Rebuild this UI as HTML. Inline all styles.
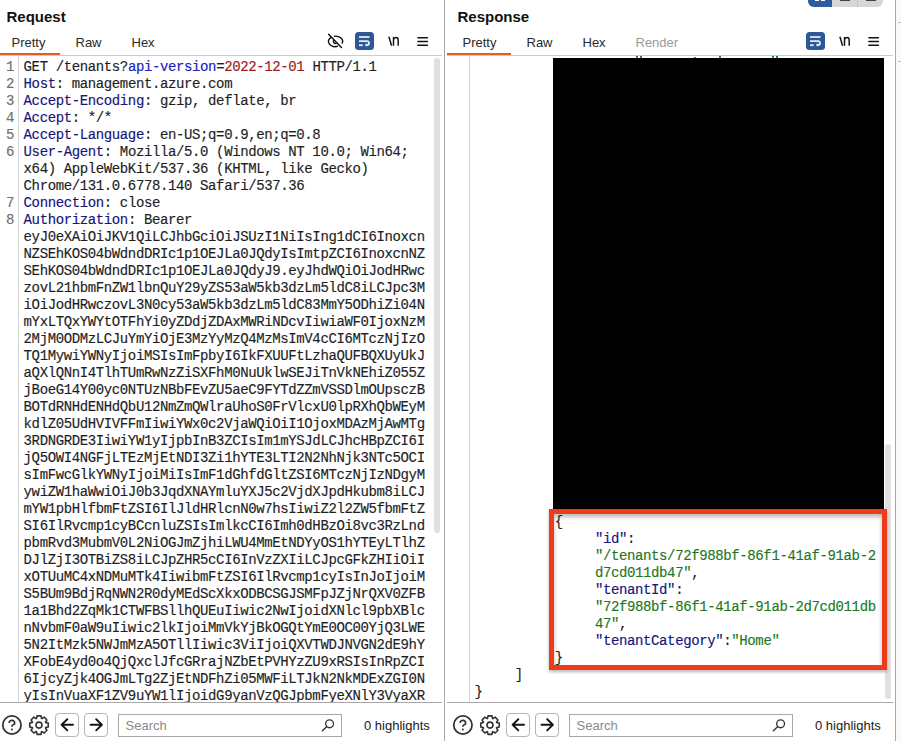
<!DOCTYPE html><html><head><meta charset="utf-8"><style>
*{margin:0;padding:0;box-sizing:border-box}
html,body{width:901px;height:741px;overflow:hidden;background:#fff}
body{position:relative;font-family:"Liberation Sans",sans-serif;color:#1e1e1e}
.panel{position:absolute;top:0;width:448px;height:741px;overflow:hidden}
.clipL{position:absolute;left:0;top:0;width:444px;height:741px;overflow:hidden}
.title{position:absolute;left:10.5px;top:8px;font-size:15px;font-weight:bold;line-height:18px;color:#111}
.tab{position:absolute;top:35px;font-size:13px;line-height:16px;color:#2a2a2a}
.tab.dis{color:#9a9a9a}
.tabline{position:absolute;left:0;top:55px;width:446px;height:1px;background:#c9cdcd}
.tabul{position:absolute;left:0;top:53px;width:64px;height:2px;background:#e9572b}
.ic{position:absolute}
.wrapbtn{position:absolute;left:359px;top:32px;width:19px;height:18px;border-radius:3.5px;background:#2d5898}
.wrapbtn svg{display:block}
.nl{position:absolute;left:391.5px;top:32.5px;font-size:14px;line-height:16px;color:#1a1a1a}
.hamb{position:absolute;left:421.5px;top:37px;width:11px;height:10px}
.hamb i{position:absolute;left:0;width:10px;height:1.5px;background:#1a1a1a;border-radius:1px}
.grp{position:absolute;left:361px;top:-18px;width:75px;height:25px;border-radius:6px;overflow:hidden;background:#d6d6d6}
.grp .g1{position:absolute;left:0;top:0;width:24px;height:25px;background:#2f5c9f}
.grp .g1 i{position:absolute;top:0;width:4px;height:19px;background:#fff}
.grp .g2{position:absolute;left:24px;top:0;width:26px;height:25px;border-right:1px solid #c4c4c4}
.grp .g2 i,.grp .g3 i{position:absolute;left:8px;top:0;width:10px;height:19px;border-bottom:1.5px solid #444}
.grp .g3{position:absolute;left:50px;top:0;width:25px;height:25px}
.gutline{position:absolute;left:22px;top:56px;width:1px;height:646px;background:#d2d2d2}
.bottomline{position:absolute;left:0;top:702px;width:446px;height:1px;background:#aaa6a6}
.abox{position:absolute;top:713px;width:24px;height:24px;border:1px solid #b9b3b3;border-radius:4px}
.abox svg{display:block}
.sbox{position:absolute;left:122px;top:714px;width:224px;height:23px;border:1px solid #aaa7a7}
.sbox span{position:absolute;left:6.5px;top:2.5px;font-size:13px;line-height:16px;color:#8a8a8a}
.hl{position:absolute;left:368px;top:717.5px;font-size:13px;line-height:16px;color:#1a1a1a}
.code{position:absolute;left:0;top:57px;width:446px;height:645px;overflow:hidden;font-family:"Liberation Mono",monospace;font-size:14px;letter-spacing:-0.38px;-webkit-text-stroke:0.15px}
.row{position:absolute;left:0;height:17px;line-height:17px;white-space:pre}
.row .n{position:absolute;left:2px;width:16px;text-align:right;color:#707070}
.row .t{position:absolute;left:27.6px;color:#1e1e1e}
.h{color:#15157a}
.qn{color:#2020b8}
.qv{color:#9a1c1c}
.k{color:#15157a}
.s{color:#1d781d}
.thumb{position:absolute;width:6px;border-radius:3px;background:#e0e0e0}
.vdiv{position:absolute;top:0;width:1px;height:741px;background:#aaa5a5}
</style></head><body>
<div class="clipL">
<div class="panel" style="left:-4px">
<div class="title">Request</div>
<div class="tab " style="left:15.5px">Pretty</div>
<div class="tab " style="left:79.5px">Raw</div>
<div class="tab " style="left:135.5px">Hex</div>
<div class="tabline"></div><div class="tabul"></div>
<svg class="ic" style="left:328px;top:30px" width="24" height="22" viewBox="0 0 24 22"><g fill="none" stroke="#111" stroke-width="1.4"><path d="M9.78 6.35 A7.1 5.2 0 0 1 17.93 13.6"/><path d="M7.13 7.3 A7.1 5.2 0 0 0 13.93 16.29"/><path d="M9.95 9.88 A2.1 2.1 0 0 0 12.48 13.18"/><path d="M4.6 4.3 L17.4 17.4" stroke-width="1.5" stroke-linecap="round"/></g></svg>
<div class="wrapbtn"><svg width="19" height="18" viewBox="0 0 19 18"><g fill="none" stroke="#e6ebf2" stroke-width="1.8"><path d="M4 5H14.5"/><path d="M4 9.15H12.1A1.95 1.95 0 0 1 12.1 13.05H11.4"/><path d="M4 13.2H7.7"/></g><path d="M9.7 13.05L11.9 11.3V14.8Z" fill="#e6ebf2"/></svg></div>
<svg class="ic" style="left:388px;top:30px" width="18" height="20" viewBox="0 0 18 20"><g fill="none" stroke="#111" stroke-width="1.45"><path d="M4.9 6.8 L7.6 15.7"/><path d="M9.5 7.0 V15.8 M9.5 9.6 C10.2 6.9 14.2 6.5 14.2 10.1 V15.8"/></g></svg>
<svg class="ic" style="left:420px;top:33px" width="14" height="16" viewBox="0 0 14 16"><g stroke="#111" stroke-width="1.45" stroke-linecap="round"><path d="M1.9 4.7H11.4M1.9 8.5H11.4M1.9 12.3H11.4"/></g></svg>
<div class="gutline"></div>
<div class="bottomline"></div>
<svg class="ic" style="left:4px;top:713px" width="24" height="24" viewBox="0 0 24 24"><circle cx="11.9" cy="12" r="9.15" fill="none" stroke="#333" stroke-width="1.75"/><path d="M9.15 10.1A2.75 2.75 0 1 1 14.45 11.1C13.3 11.8 11.9 12.2 11.9 13.3V13.7" fill="none" stroke="#333" stroke-width="1.7" stroke-linecap="butt"/><circle cx="11.9" cy="16.6" r="1.0" fill="#333"/></svg>
<svg class="ic" style="left:31px;top:713px" width="24" height="24" viewBox="0 0 24 24"><path d="M9.46 5.47 L10.04 2.86 L13.96 2.86 L14.54 5.47 L14.89 5.61 L17.15 4.17 L19.93 6.95 L18.49 9.21 L18.63 9.56 L21.24 10.14 L21.24 14.06 L18.63 14.64 L18.49 14.99 L19.93 17.25 L17.15 20.03 L14.89 18.59 L14.54 18.73 L13.96 21.34 L10.04 21.34 L9.46 18.73 L9.11 18.59 L6.85 20.03 L4.07 17.25 L5.51 14.99 L5.37 14.64 L2.76 14.06 L2.76 10.14 L5.37 9.56 L5.51 9.21 L4.07 6.95 L6.85 4.17 L9.11 5.61 Z" fill="none" stroke="#333" stroke-width="1.6" stroke-linejoin="round"/><circle cx="12" cy="12.1" r="3.0" fill="none" stroke="#333" stroke-width="1.6"/></svg>
<div class="abox" style="left:59px"><svg width="23" height="23" viewBox="0 0 23 23"><path d="M17 10.8H5.8M11.3 5.2L5.6 10.8L11.3 16.4" fill="none" stroke="#161616" stroke-width="1.9" stroke-linecap="round" stroke-linejoin="round"/></svg></div>
<div class="abox" style="left:88px"><svg width="23" height="23" viewBox="0 0 23 23"><path d="M5.5 10.8H16.7M11.2 5.2L16.9 10.8L11.2 16.4" fill="none" stroke="#161616" stroke-width="1.9" stroke-linecap="round" stroke-linejoin="round"/></svg></div>
<div class="sbox"><span>Search</span><svg style="position:absolute;left:199.5px;top:4px" width="16" height="15" viewBox="0 0 16 15"><circle cx="10.6" cy="4.8" r="3.9" fill="none" stroke="#333" stroke-width="1.35"/><path d="M7.8 7.6L3.4 11.8" stroke="#333" stroke-width="1.4" stroke-linecap="round"/></svg></div>
<div class="hl">0 highlights</div>
<div class="code">
<div class="row" style="top:2px"><span class="n">1</span><span class="t">GET /tenants?<span class="qn">api-version</span>=<span class="qv">2022-12-01</span> HTTP/1.1</span></div>
<div class="row" style="top:19px"><span class="n">2</span><span class="t"><span class="h">Host</span>: management.azure.com</span></div>
<div class="row" style="top:36px"><span class="n">3</span><span class="t"><span class="h">Accept-Encoding</span>: gzip, deflate, br</span></div>
<div class="row" style="top:53px"><span class="n">4</span><span class="t"><span class="h">Accept</span>: */*</span></div>
<div class="row" style="top:70px"><span class="n">5</span><span class="t"><span class="h">Accept-Language</span>: en-US;q=0.9,en;q=0.8</span></div>
<div class="row" style="top:87px"><span class="n">6</span><span class="t"><span class="h">User-Agent</span>: Mozilla/5.0 (Windows NT 10.0; Win64;</span></div>
<div class="row" style="top:104px"><span class="n"></span><span class="t">x64) AppleWebKit/537.36 (KHTML, like Gecko)</span></div>
<div class="row" style="top:121px"><span class="n"></span><span class="t">Chrome/131.0.6778.140 Safari/537.36</span></div>
<div class="row" style="top:138px"><span class="n">7</span><span class="t"><span class="h">Connection</span>: close</span></div>
<div class="row" style="top:155px"><span class="n">8</span><span class="t"><span class="h">Authorization</span>: Bearer</span></div>
<div class="row" style="top:172px"><span class="n"></span><span class="t">eyJ0eXAiOiJKV1QiLCJhbGciOiJSUzI1NiIsIng1dCI6Inoxcn</span></div>
<div class="row" style="top:189px"><span class="n"></span><span class="t">NZSEhKOS04bWdndDRIc1p1OEJLa0JQdyIsImtpZCI6InoxcnNZ</span></div>
<div class="row" style="top:206px"><span class="n"></span><span class="t">SEhKOS04bWdndDRIc1p1OEJLa0JQdyJ9.eyJhdWQiOiJodHRwc</span></div>
<div class="row" style="top:223px"><span class="n"></span><span class="t">zovL21hbmFnZW1lbnQuY29yZS53aW5kb3dzLm5ldC8iLCJpc3M</span></div>
<div class="row" style="top:240px"><span class="n"></span><span class="t">iOiJodHRwczovL3N0cy53aW5kb3dzLm5ldC83MmY5ODhiZi04N</span></div>
<div class="row" style="top:257px"><span class="n"></span><span class="t">mYxLTQxYWYtOTFhYi0yZDdjZDAxMWRiNDcvIiwiaWF0IjoxNzM</span></div>
<div class="row" style="top:274px"><span class="n"></span><span class="t">2MjM0ODMzLCJuYmYiOjE3MzYyMzQ4MzMsImV4cCI6MTczNjIzO</span></div>
<div class="row" style="top:291px"><span class="n"></span><span class="t">TQ1MywiYWNyIjoiMSIsImFpbyI6IkFXUUFtLzhaQUFBQXUyUkJ</span></div>
<div class="row" style="top:308px"><span class="n"></span><span class="t">aQXlQNnI4TlhTUmRwNzZiSXFhM0NuUklwSEJiTnVkNEhiZ055Z</span></div>
<div class="row" style="top:325px"><span class="n"></span><span class="t">jBoeG14Y00yc0NTUzNBbFEvZU5aeC9FYTdZZmVSSDlmOUpsczB</span></div>
<div class="row" style="top:342px"><span class="n"></span><span class="t">BOTdRNHdENHdQbU12NmZmQWlraUhoS0FrVlcxU0lpRXhQbWEyM</span></div>
<div class="row" style="top:359px"><span class="n"></span><span class="t">kdlZ05UdHVIVFFmIiwiYWx0c2VjaWQiOiI1OjoxMDAzMjAwMTg</span></div>
<div class="row" style="top:376px"><span class="n"></span><span class="t">3RDNGRDE3IiwiYW1yIjpbInB3ZCIsIm1mYSJdLCJhcHBpZCI6I</span></div>
<div class="row" style="top:393px"><span class="n"></span><span class="t">jQ5OWI4NGFjLTEzMjEtNDI3Zi1hYTE3LTI2N2NhNjk3NTc5OCI</span></div>
<div class="row" style="top:410px"><span class="n"></span><span class="t">sImFwcGlkYWNyIjoiMiIsImF1dGhfdGltZSI6MTczNjIzNDgyM</span></div>
<div class="row" style="top:427px"><span class="n"></span><span class="t">ywiZW1haWwiOiJ0b3JqdXNAYmluYXJ5c2VjdXJpdHkubm8iLCJ</span></div>
<div class="row" style="top:444px"><span class="n"></span><span class="t">mYW1pbHlfbmFtZSI6IlJldHRlcnN0w7hsIiwiZ2l2ZW5fbmFtZ</span></div>
<div class="row" style="top:461px"><span class="n"></span><span class="t">SI6IlRvcmp1cyBCcnluZSIsImlkcCI6Imh0dHBzOi8vc3RzLnd</span></div>
<div class="row" style="top:478px"><span class="n"></span><span class="t">pbmRvd3MubmV0L2NiOGJmZjhiLWU4MmEtNDYyOS1hYTEyLTlhZ</span></div>
<div class="row" style="top:495px"><span class="n"></span><span class="t">DJlZjI3OTBiZS8iLCJpZHR5cCI6InVzZXIiLCJpcGFkZHIiOiI</span></div>
<div class="row" style="top:512px"><span class="n"></span><span class="t">xOTUuMC4xNDMuMTk4IiwibmFtZSI6IlRvcmp1cyIsInJoIjoiM</span></div>
<div class="row" style="top:529px"><span class="n"></span><span class="t">S5BUm9BdjRqNWN2R0dyMEdScXkxODBCSGJSMFpJZjNrQXV0ZFB</span></div>
<div class="row" style="top:546px"><span class="n"></span><span class="t">1a1Bhd2ZqMk1CTWFBSllhQUEuIiwic2NwIjoidXNlcl9pbXBlc</span></div>
<div class="row" style="top:563px"><span class="n"></span><span class="t">nNvbmF0aW9uIiwic2lkIjoiMmVkYjBkOGQtYmE0OC00YjQ3LWE</span></div>
<div class="row" style="top:580px"><span class="n"></span><span class="t">5N2ItMzk5NWJmMzA5OTllIiwic3ViIjoiQXVTWDJNVGN2dE9hY</span></div>
<div class="row" style="top:597px"><span class="n"></span><span class="t">XFobE4yd0o4QjQxclJfcGRrajNZbEtPVHYzZU9xRSIsInRpZCI</span></div>
<div class="row" style="top:614px"><span class="n"></span><span class="t">6IjcyZjk4OGJmLTg2ZjEtNDFhZi05MWFiLTJkN2NkMDExZGI0N</span></div>
<div class="row" style="top:631px"><span class="n"></span><span class="t">yIsInVuaXF1ZV9uYW1lIjoidG9yanVzQGJpbmFyeXNlY3VyaXR</span></div>
</div>
<div class="thumb" style="left:438px;top:58px;height:475px"></div>
</div>
</div>
<div class="vdiv" style="left:444px"></div>
<div class="panel" style="left:447px">
<div class="title">Response</div>
<div class="tab " style="left:15.5px">Pretty</div>
<div class="tab " style="left:79.5px">Raw</div>
<div class="tab " style="left:135.5px">Hex</div>
<div class="tab dis" style="left:188.5px">Render</div>
<div class="tabline"></div><div class="tabul"></div>
<div class="wrapbtn"><svg width="19" height="18" viewBox="0 0 19 18"><g fill="none" stroke="#e6ebf2" stroke-width="1.8"><path d="M4 5H14.5"/><path d="M4 9.15H12.1A1.95 1.95 0 0 1 12.1 13.05H11.4"/><path d="M4 13.2H7.7"/></g><path d="M9.7 13.05L11.9 11.3V14.8Z" fill="#e6ebf2"/></svg></div>
<svg class="ic" style="left:388px;top:30px" width="18" height="20" viewBox="0 0 18 20"><g fill="none" stroke="#111" stroke-width="1.45"><path d="M4.9 6.8 L7.6 15.7"/><path d="M9.5 7.0 V15.8 M9.5 9.6 C10.2 6.9 14.2 6.5 14.2 10.1 V15.8"/></g></svg>
<svg class="ic" style="left:420px;top:33px" width="14" height="16" viewBox="0 0 14 16"><g stroke="#111" stroke-width="1.45" stroke-linecap="round"><path d="M1.9 4.7H11.4M1.9 8.5H11.4M1.9 12.3H11.4"/></g></svg>
<div class="grp"><div class="g1"><i style="left:7px"></i><i style="left:13px"></i></div><div class="g2"><i></i></div><div class="g3"><i></i></div></div>
<div class="gutline"></div>
<div class="bottomline"></div>
<svg class="ic" style="left:4px;top:713px" width="24" height="24" viewBox="0 0 24 24"><circle cx="11.9" cy="12" r="9.15" fill="none" stroke="#333" stroke-width="1.75"/><path d="M9.15 10.1A2.75 2.75 0 1 1 14.45 11.1C13.3 11.8 11.9 12.2 11.9 13.3V13.7" fill="none" stroke="#333" stroke-width="1.7" stroke-linecap="butt"/><circle cx="11.9" cy="16.6" r="1.0" fill="#333"/></svg>
<svg class="ic" style="left:31px;top:713px" width="24" height="24" viewBox="0 0 24 24"><path d="M9.46 5.47 L10.04 2.86 L13.96 2.86 L14.54 5.47 L14.89 5.61 L17.15 4.17 L19.93 6.95 L18.49 9.21 L18.63 9.56 L21.24 10.14 L21.24 14.06 L18.63 14.64 L18.49 14.99 L19.93 17.25 L17.15 20.03 L14.89 18.59 L14.54 18.73 L13.96 21.34 L10.04 21.34 L9.46 18.73 L9.11 18.59 L6.85 20.03 L4.07 17.25 L5.51 14.99 L5.37 14.64 L2.76 14.06 L2.76 10.14 L5.37 9.56 L5.51 9.21 L4.07 6.95 L6.85 4.17 L9.11 5.61 Z" fill="none" stroke="#333" stroke-width="1.6" stroke-linejoin="round"/><circle cx="12" cy="12.1" r="3.0" fill="none" stroke="#333" stroke-width="1.6"/></svg>
<div class="abox" style="left:59px"><svg width="23" height="23" viewBox="0 0 23 23"><path d="M17 10.8H5.8M11.3 5.2L5.6 10.8L11.3 16.4" fill="none" stroke="#161616" stroke-width="1.9" stroke-linecap="round" stroke-linejoin="round"/></svg></div>
<div class="abox" style="left:88px"><svg width="23" height="23" viewBox="0 0 23 23"><path d="M5.5 10.8H16.7M11.2 5.2L16.9 10.8L11.2 16.4" fill="none" stroke="#161616" stroke-width="1.9" stroke-linecap="round" stroke-linejoin="round"/></svg></div>
<div class="sbox"><span>Search</span><svg style="position:absolute;left:199.5px;top:4px" width="16" height="15" viewBox="0 0 16 15"><circle cx="10.6" cy="4.8" r="3.9" fill="none" stroke="#333" stroke-width="1.35"/><path d="M7.8 7.6L3.4 11.8" stroke="#333" stroke-width="1.4" stroke-linecap="round"/></svg></div>
<div class="hl">0 highlights</div>
<div class="code">
<div class="row" style="top:457px"><span class="t">          {</span></div>
<div class="row" style="top:474px"><span class="t">               <span class="k">"id"</span>:</span></div>
<div class="row" style="top:491px"><span class="t">               <span class="s">"/tenants/72f988bf-86f1-41af-91ab-2</span></span></div>
<div class="row" style="top:508px"><span class="t">               <span class="s">d7cd011db47"</span>,</span></div>
<div class="row" style="top:525px"><span class="t">               <span class="k">"tenantId"</span>:</span></div>
<div class="row" style="top:542px"><span class="t">               <span class="s">"72f988bf-86f1-41af-91ab-2d7cd011db</span></span></div>
<div class="row" style="top:559px"><span class="t">               <span class="s">47"</span>,</span></div>
<div class="row" style="top:576px"><span class="t">               <span class="k">"tenantCategory"</span>:<span class="s">"Home"</span></span></div>
<div class="row" style="top:593px"><span class="t">          }</span></div>
<div class="row" style="top:610px"><span class="t">     ]</span></div>
<div class="row" style="top:627px"><span class="t">}</span></div>
</div>
<div style="position:absolute;left:189px;top:56px;width:2px;height:2px;background:#2a862a"></div><div style="position:absolute;left:193px;top:56px;width:2px;height:2px;background:#2a862a"></div><div style="position:absolute;left:247px;top:57px;width:1.5px;height:1px;background:#2a862a"></div><div style="position:absolute;left:272px;top:56px;width:1.5px;height:2px;background:#2a862a"></div><div style="position:absolute;left:325px;top:56px;width:2px;height:2px;background:#2a862a"></div><div style="position:absolute;left:329px;top:56px;width:2px;height:2px;background:#2a862a"></div>
<div class="black" style="position:absolute;left:106px;top:58px;width:331px;height:451px;background:#000"></div>
<div class="thumb" style="left:438px;top:444px;height:255px"></div>
<div style="position:absolute;left:102px;top:509px;width:338px;height:161px;border:5px solid #ee3b19;box-shadow:0 2px 3px rgba(0,0,0,0.28), inset 0 3px 4px rgba(0,0,0,0.28)"></div>
</div>
<div class="vdiv" style="left:895px"></div>
<div style="position:absolute;left:896px;top:0;width:5px;height:741px;background:#f9f9f9"></div>
<div style="position:absolute;left:898px;top:22px;width:3px;height:1px;background:#bdbdbd"></div>
<div style="position:absolute;left:898px;top:61px;width:3px;height:1px;background:#bdbdbd"></div>
</body></html>
